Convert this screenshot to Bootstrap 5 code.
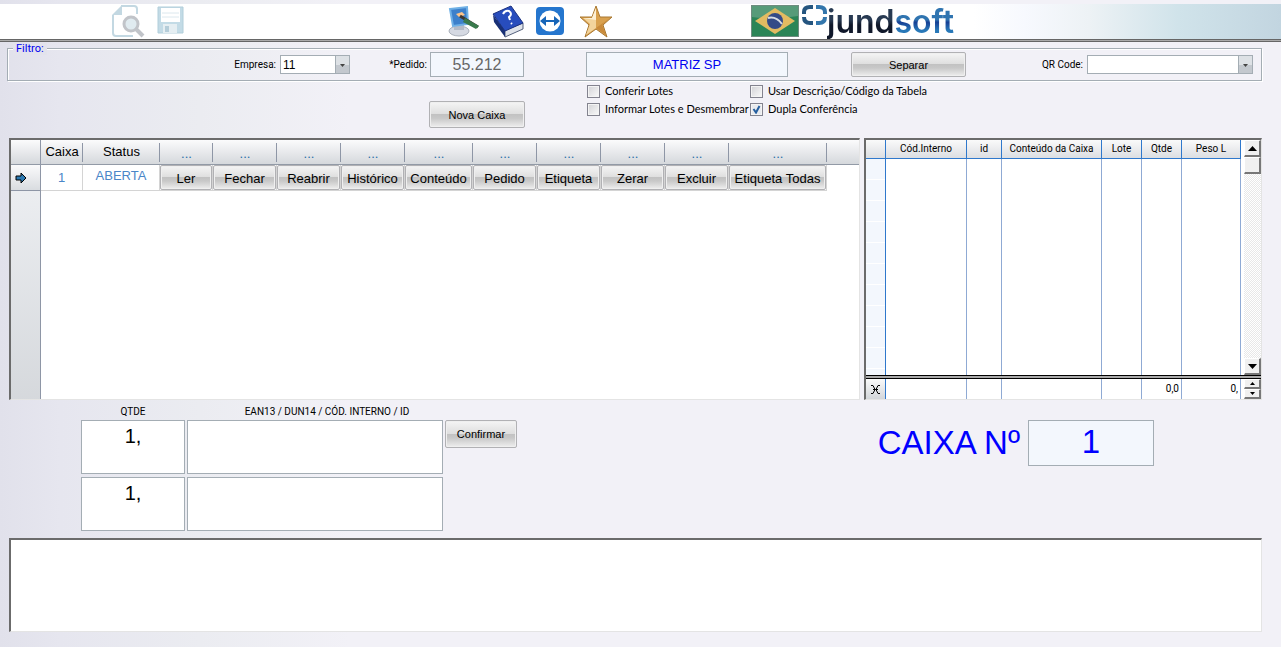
<!DOCTYPE html>
<html lang="pt-BR">
<head>
<meta charset="utf-8">
<meta name="viewport" content="width=device-width, initial-scale=1">
<title>Conferência de Caixas</title>
<link href="https://cdn.jsdelivr.net/npm/bootstrap@5.3.0/dist/css/bootstrap.min.css" rel="stylesheet">
<style>
body{font-family:"Liberation Sans",Arial,sans-serif;font-size:11px;line-height:14px;color:#000;background:linear-gradient(90deg,#e1e1eb 0,#e6e6ef 60px,#ebecf1 200px,#f2f1f7 350px) #f2f1f7;min-height:100vh}
.tiny{font-family:Roboto,"Liberation Sans",sans-serif;font-size:10px;white-space:nowrap}
.topbar{height:35px;margin-top:4px;background:linear-gradient(90deg,#fff 76%,#f7f9fe 80%,#edf2f5 85%,#d0e3ea 92%,#c2d5e0 100%)}
.topbar-line{height:3px;background:#aaa;border-top:1px solid #666;border-bottom:1px solid #666}
.tool{border:0;padding:0;background:none;display:block;line-height:0}
.tools-a{margin-left:111px;gap:12px}
.tools-b{margin-left:264px;gap:12px}
.brand{margin-left:137px;gap:3px}
.wordmark{font-family:Inter,sans-serif;font-weight:600;font-size:32px;line-height:35px;color:transparent;background:linear-gradient(#283a52 45%,#10182a 60%);-webkit-background-clip:text;background-clip:text}
.wordmark.tail{background-image:linear-gradient(#2f74b0 45%,#163f94 52%,#2878b8 75%)}
.filter{position:relative;margin:1px 19px 0 7px;padding-top:5px;height:38px}
.filter legend{position:absolute;top:0;left:0;z-index:1;float:none;width:auto;margin:0 0 0 6px;padding:0 3px;font-size:11px;line-height:12px;color:#0000f0;background:#e3e3ec}
.filter-frame{border:1px solid #a4adb4;box-shadow:1px 1px 0 #fff,inset 1px 1px 0 #fff;height:33px;padding:0 8px 0 224px}
.field{border:1px solid #a4adb4;border-radius:0;background:#fff;color:#000;padding:0 2px;outline:0}
.field.ro{background:#f3f7fd}
.drop{appearance:none;height:19px;padding:0 16px 0 2px;font-size:12px;line-height:16px;background:url("data:image/svg+xml,%3Csvg xmlns='http://www.w3.org/2000/svg' width='14' height='17'%3E%3Crect width='14' height='9' fill='%23dde1e5'/%3E%3Crect y='9' width='14' height='8' fill='%23c3c8ce'/%3E%3Cpath d='M0 0v17' stroke='%23a4adb4' stroke-width='2'/%3E%3Cpath d='M5 8h5l-2.500 3z' fill='%23444'/%3E%3C/svg%3E") right center no-repeat #fff}
.w-emp{width:70px}.w-qr{width:166px}
.lab{width:44px;text-align:right}
.lab-ped{margin-left:33px}
.w-ped{width:94px;height:25px;font-size:16px;color:#666;margin:0 62px 0 3px}
.w-mat{width:202px;height:25px;font-size:13px;color:#0000f0}
.xbtn{border:1px solid #b1b1b4;border-radius:2px;box-shadow:inset 0 0 0 1px #efefef;color:#000;padding:0;text-align:center;background:linear-gradient(#f5f5f5,#dedede 49%,#c2c2c2 50%,#c8c8c8 65%,#eee)}
.sep{width:115px;height:25px;margin-left:63px}
.options{height:57px}
.w-nova{width:96px;height:27px;margin:20px 62px 0 429px}
.checks{display:grid;grid-template-columns:163px auto;row-gap:4px;margin-top:3px;font-family:Lato,"Liberation Sans",sans-serif}
.checks label{display:flex;align-items:center;gap:5px;white-space:nowrap}
.tick{appearance:none;flex:none;width:13px;height:13px;margin:0;border:1px solid #83838f;background:linear-gradient(135deg,#d2d2d6,#fafafa);box-shadow:inset 0 0 0 1px #f4f4f4}
.tick:checked{background:url("data:image/svg+xml,%3Csvg xmlns='http://www.w3.org/2000/svg' width='11' height='11'%3E%3Cpath d='M2.500 5l2.500 3.500L8.500 2' fill='none' stroke='%23265f9f' stroke-width='2'/%3E%3C/svg%3E") #e8eaee}
.panels{margin:0 19px 0 9px;gap:4px}
.sunken{border:solid;border-width:2px 1px 1px 2px;border-color:#6b6b6b #e4e4e4 #e4e4e4 #6b6b6b;background:#fff;height:262px;min-width:0;overflow:hidden}
.boxes{background:linear-gradient(#8e96a6,#8e96a6) 29px 0/1px 100% no-repeat,linear-gradient(#eef0f3,#d3d6da) 0 25px/29px 100% no-repeat,#fff}
.boxes table,.items table{table-layout:fixed;border-collapse:separate;border-spacing:0}
.boxes table{width:100%;font-size:13px;line-height:16px}
.boxes th{height:25px;padding:0;font-weight:400;text-align:center;border-bottom:1px solid #929aa6;background:linear-gradient(#8e96a6,#8e96a6) right 3px/1px 19px no-repeat,linear-gradient(#fbfbfc,#d5d8dc)}
.boxes th:first-child{background:linear-gradient(#8e96a6,#8e96a6) right 0/1px 100% no-repeat,linear-gradient(#fbfbfc,#d5d8dc)}
.boxes th:last-child{background:linear-gradient(#fbfbfc,#d5d8dc)}
.boxes th.dots{color:#2a6fa8;padding-top:4px}
.boxes td{height:26px;padding:0;text-align:center;color:#4a86c8;border-right:1px solid #d4d4d4;border-bottom:1px solid #d4d4d4}
.boxes td:first-child{border-right-color:#8e96a6;border-bottom-color:#8e96a6;background:linear-gradient(#fafafb,#d9dce0)}
.boxes td:last-child{border:0}
.boxes td .xbtn{display:block;width:100%;height:25px;line-height:22px;white-space:nowrap;padding-top:2px}
.items{width:398px;flex:none}
.items table{width:375px}
.items th{height:19px;padding:0;font-weight:400;text-align:center;border-right:1px solid #2f78cc;border-bottom:1px solid #2f78cc;background:linear-gradient(#fafafa,#dcdee2)}
.items td{padding:0 2px;text-align:right;border-right:1px solid #8faad4}
.items tbody td{height:216px}
.items tbody td:first-child{background:repeating-linear-gradient(#f3f7fd 0 20px,#fff 20px 21px)}
.items tr>:first-child{border-right-color:#2f78cc}
.items tfoot td{height:20px}
.items tfoot td:first-child{text-align:center;line-height:0;background:linear-gradient(#fafafa,#d3d6da)}
.splitter{height:4px;flex:none;border:solid #000;border-width:1px 0;background:#aaa}
.scroll{width:17px;background:repeating-conic-gradient(#e8e8e8 0 25%,#fff 0 50%) 0 0/2px 2px}
.sbtn{display:flex;align-items:center;justify-content:center;width:17px;height:17px;padding:0;background:#f0f0f0;border:solid;border-width:1px 2px 2px 1px;border-color:#fff #777 #777 #fff}
.sbtn.half{height:10px}
.entry{height:138px;margin:0 19px 0 81px}
.entry-grid{display:grid;grid-template-columns:104px 256px 72px;column-gap:2px;row-gap:3px;grid-template-rows:13px 54px 54px;align-content:start;text-align:center;padding-top:4px}
.entry-grid label{line-height:15px}
.entry-grid .code{padding-left:24px}
.entry-grid .field{font-size:20px;line-height:24px;padding:0 0 22px;text-align:center;width:100%}
.entry-grid .xbtn{height:28px}
.boxno{margin:20px 108px 0 auto;color:#0000ff;font-size:33px;line-height:46px;gap:8px}
.boxno .field{width:126px;height:46px;color:#0000ff;text-align:center;padding-bottom:3px}
.log{display:block;width:calc(100% - 28px);height:94px;margin:0 0 0 9px;border-radius:0;resize:none}
</style>
</head>
<body>
<div class="d-flow-root overflow-hidden">
<header>
<div class="topbar d-flex align-items-start">
<div class="tools-a d-flex">
<button class="tool" aria-label="Visualizar"><svg width="34" height="35"><path d="M10 2h13q3 0 3 3v5M2 11v18q0 3 3 3h17" fill="none" stroke="#c3d8e2" stroke-width="2"/><path d="M1 11L11 1v10z" fill="#c3d8e2"/><circle cx="20" cy="20" r="7" fill="#e0ebf0" stroke="#c1c4c9" stroke-width="3"/><path d="M25 25l7 7" stroke="#c1c4c9" stroke-width="4"/></svg></button>
<button class="tool" aria-label="Salvar"><svg width="27" height="35"><path d="M1 3h25v26H1z" fill="#c3dbe6" stroke="#b1ceda"/><path d="M4 4h19v14H4z" fill="#fff"/><path d="M5 9h17M5 13h17" stroke="#dce8ee"/><path d="M6 20h14v9H6z" fill="#e5eef2"/><path d="M8 22h4v6H8z" fill="#b5cdd9"/></svg></button>
</div>
<div class="tools-b d-flex">
<button class="tool" aria-label="Aparência"><svg width="32" height="35"><ellipse cx="11" cy="27" rx="10" ry="5" fill="#d5d9e2" stroke="#aab0ba"/><path d="M6 20h10v6H6z" fill="#b4bbc7"/><path d="M2 5l17-2 1 17-15 2z" fill="#3d80cb" stroke="#6fb0e6" stroke-width="2"/><path d="M8 10l6-2 3 3-6 2z" fill="#ffc58a"/><path d="M12 12l18 11" stroke="#3f3730" stroke-width="3"/><path d="M17 14l14 8-3 3-13-7z" fill="#397a4c"/></svg></button>
<button class="tool" aria-label="Ajuda"><svg width="32" height="35"><path d="M13 33l18-8v-6L13 26z" fill="#dfe3ea" stroke="#55617c"/><path d="M1 11l12 15v7L2 18z" fill="#183075"/><path d="M1 10L19 2l12 17-18 8z" fill="#284dbd" stroke="#1b3180"/><path d="M11 10q2-4 6-3 4 3 0 6l1 3M19 19l1 1" fill="none" stroke="#fff" stroke-width="2"/></svg></button>
<button class="tool" aria-label="Acesso remoto"><svg width="32" height="35"><rect x="0" y="3" width="28" height="28" rx="4" fill="#2576ce"/><circle cx="14" cy="17" r="10.500" fill="#fff"/><path d="M4 17l6-5v4h8v-4l6 5-6 5v-4h-8v4z" fill="#1765b8"/></svg></button>
<button class="tool" aria-label="Favoritos"><svg width="34" height="35"><path d="M16 2l4 11h12l-9 8 4 12-11-8-11 8 4-12-9-8h12z" fill="#d9a14f" stroke="#a97832"/><path d="M16 4v20L6 31l4-11-7-6h9z" fill="#f3d49c"/><path d="M16 4v12L3 14h9z" fill="#fdf0d6"/><path d="M16 24l14-10-8 7 4 10z" fill="#c98a3b"/></svg></button>
</div>
<div class="brand d-flex">
<svg width="48" height="35"><rect x=".5" y="1.500" width="47" height="31" fill="#2c8557" stroke="#6f8c80"/><path d="M1 2h46v10Q24 16 1 13z" fill="#579b79"/><path d="M4 17L24 4l20 13-20 13z" fill="#e3bb61"/><circle cx="24" cy="17" r="8" fill="#344a87"/><path d="M17 14q8-2 14 6" fill="none" stroke="#d7dce5" stroke-width="2"/></svg>
<div class="d-flex"><svg width="25" height="24"><g fill="none" stroke-width="4"><path d="M11 3H8Q2 3 2 8v2M2 13q0 6 6 6h3" stroke="#25557f"/><path d="M14 3h3q6 0 6 5v2M23 13q0 6-6 6h-3" stroke="#3376ac"/></g></svg><span class="wordmark">jund</span><span class="wordmark tail">soft</span></div>
</div>
</div>
<div class="topbar-line"></div>
</header>

<fieldset class="filter">
<legend class="tiny">Filtro:</legend>
<div class="filter-frame d-flex align-items-center">
<label class="tiny lab" for="emp">Empresa:</label>
<select id="emp" class="field drop w-emp ms-1"><option>11</option></select>
<label class="tiny lab lab-ped" for="ped">*Pedido:</label>
<input id="ped" class="field ro w-ped text-center" value="55.212">
<input aria-label="Nome da empresa" class="field ro w-mat text-center" value="MATRIZ SP">
<button class="xbtn sep">Separar</button>
<label class="tiny ms-auto" for="qr">QR Code:</label>
<select id="qr" class="field drop w-qr ms-1"><option></option></select>
</div>
</fieldset>

<div class="options d-flex align-items-start">
<button class="xbtn w-nova">Nova Caixa</button>
<div class="checks">
<label><input type="checkbox" class="tick">Conferir Lotes</label>
<label><input type="checkbox" class="tick">Usar Descrição/Código da Tabela</label>
<label><input type="checkbox" class="tick">Informar Lotes e Desmembrar</label>
<label><input type="checkbox" class="tick" checked>Dupla Conferência</label>
</div>
</div>

<main>
<div class="panels d-flex">
<section class="sunken boxes flex-fill">
<table>
<colgroup><col style="width:30px"><col style="width:42px"><col style="width:77px"><col style="width:53px"><col style="width:64px"><col style="width:64px"><col style="width:64px"><col style="width:68px"><col style="width:64px"><col style="width:64px"><col style="width:64px"><col style="width:64px"><col style="width:98px"><col></colgroup>
<thead><tr><th></th><th>Caixa</th><th>Status</th><th class="dots">...</th><th class="dots">...</th><th class="dots">...</th><th class="dots">...</th><th class="dots">...</th><th class="dots">...</th><th class="dots">...</th><th class="dots">...</th><th class="dots">...</th><th class="dots">...</th><th></th></tr></thead>
<tbody><tr><td><svg class="d-block ms-1" width="12" height="12"><path d="M1 4h5V1l5 5-5 5V8H1z" fill="#2a78b0" stroke="#000"/></svg></td><td>1</td><td class="pb-1">ABERTA</td>
<td><button class="xbtn">Ler</button></td><td><button class="xbtn">Fechar</button></td><td><button class="xbtn">Reabrir</button></td><td><button class="xbtn">Histórico</button></td><td><button class="xbtn">Conteúdo</button></td><td><button class="xbtn">Pedido</button></td><td><button class="xbtn">Etiqueta</button></td><td><button class="xbtn">Zerar</button></td><td><button class="xbtn">Excluir</button></td><td><button class="xbtn">Etiqueta Todas</button></td><td></td></tr></tbody>
</table>
</section>
<section class="sunken items tiny d-flex flex-column">
<div class="d-flex justify-content-between">
<table>
<colgroup><col style="width:20px"><col style="width:81px"><col style="width:35px"><col style="width:100px"><col style="width:40px"><col style="width:40px"><col style="width:59px"></colgroup>
<thead><tr><th></th><th>Cód.Interno</th><th>id</th><th>Conteúdo da Caixa</th><th>Lote</th><th>Qtde</th><th>Peso L</th></tr></thead>
<tbody><tr><td></td><td></td><td></td><td></td><td></td><td></td><td></td></tr></tbody>
</table>
<div class="scroll d-flex flex-column">
<button class="sbtn" aria-label="Subir"><svg width="9" height="5"><path d="M0 5l4.500-5L9 5z"/></svg></button>
<button class="sbtn" aria-label="Posição"></button>
<button class="sbtn mt-auto" aria-label="Descer"><svg width="9" height="5"><path d="M0 0l4.500 5L9 0z"/></svg></button>
</div>
</div>
<div class="splitter"></div>
<div class="d-flex justify-content-between">
<table>
<colgroup><col style="width:20px"><col style="width:81px"><col style="width:35px"><col style="width:100px"><col style="width:40px"><col style="width:40px"><col style="width:59px"></colgroup>
<tfoot><tr><td><svg width="9" height="9"><path d="M0 .5h2l2 4-2 4H0M9 .5H7l-2 4 2 4h2M2 4.500h5" fill="none" stroke="#000"/></svg></td><td></td><td></td><td></td><td></td><td>0,0</td><td>0,</td></tr></tfoot>
</table>
<div class="d-flex flex-column">
<button class="sbtn half" aria-label="Total anterior"><svg width="5" height="3"><path d="M0 3l2.500-3L5 3z"/></svg></button>
<button class="sbtn half" aria-label="Próximo total"><svg width="5" height="3"><path d="M0 0l2.500 3L5 0z"/></svg></button>
</div>
</div>
</section>
</div>

<div class="entry d-flex">
<div class="entry-grid">
<label class="tiny" for="q1">QTDE</label><label class="tiny code" for="c1">EAN13 / DUN14 / CÓD. INTERNO / ID</label><span></span>
<input id="q1" class="field" value="1,"><input id="c1" class="field"><button class="xbtn">Confirmar</button>
<input aria-label="QTDE 2" class="field" value="1,"><input aria-label="Código 2" class="field"><span></span>
</div>
<div class="boxno d-flex align-items-start"><label for="cx">CAIXA Nº</label><input id="cx" class="field ro" value="1"></div>
</div>
<textarea class="sunken log" aria-label="Mensagens"></textarea>
</main>
</div>
<script src="https://cdn.jsdelivr.net/npm/bootstrap@5.3.0/dist/js/bootstrap.bundle.min.js"></script>
</body>
</html>
